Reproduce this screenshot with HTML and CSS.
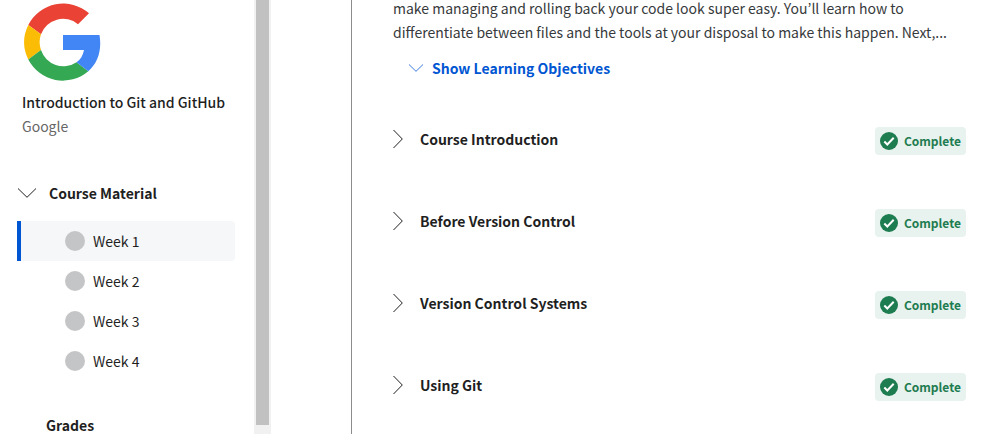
FILE: index.html
```html
<!DOCTYPE html>
<html lang="en">
<head>
<meta charset="utf-8">
<title>Introduction to Git and GitHub</title>
<link rel="stylesheet" href="styles.css">
</head>
<body>
<svg class="defs" aria-hidden="true">
  <symbol id="chevron-down" viewBox="0 0 18 10"><path d="M0 .5 9 9.300 18 .5"/></symbol>
  <symbol id="chevron-right" viewBox="0 0 10 18"><path d="M.5 0 9.300 9 .5 18"/></symbol>
  <symbol id="check" viewBox="0 0 18 18"><circle cx="9" cy="9" r="9"/><path d="M4.300 9.500 7.300 12.500 13.700 5.700"/></symbol>
</svg>
<div class="page">
  <aside class="sidebar">
    <div class="sidebar-content">
      <header class="course">
        <svg class="logo" viewBox="0 0 77 78" role="img" aria-label="Google">
          <path fill="#ea4335" d="M4.300 22A39 39 0 0 1 65 10.300L54 21.200A23.500 23.500 0 0 0 17 31.200Z"/>
          <path fill="#fbbc05" d="M4.300 22A39 39 0 0 0 4.300 56.500L17 47A23.500 23.500 0 0 1 17 31.200Z"/>
          <path fill="#34a853" d="M4.300 56.500A39 39 0 0 0 64.300 68.300L52.500 59.200A23.500 23.500 0 0 1 17 47Z"/>
          <path fill="#4285f4" d="M39 32H75.500C78 47 74 59.500 64.300 68.300L52.500 59.200C56.500 56.500 59 52.500 60 47H39Z"/>
        </svg>
        <h1 class="title">Introduction to Git and GitHub</h1>
        <p class="partner">Google</p>
      </header>
      <nav class="nav">
        <button class="nav-toggle" type="button" aria-expanded="true"><svg class="down" aria-hidden="true"><use href="#chevron-down"/></svg>Course Material</button>
        <ul class="weeks">
          <li><a class="week current" href="#week-1"><span class="dot"></span>Week 1</a></li>
          <li><a class="week" href="#week-2"><span class="dot"></span>Week 2</a></li>
          <li><a class="week" href="#week-3"><span class="dot"></span>Week 3</a></li>
          <li><a class="week" href="#week-4"><span class="dot"></span>Week 4</a></li>
        </ul>
        <a class="grades" href="#grades">Grades</a>
      </nav>
    </div>
    <div class="track"><div class="thumb"></div></div>
  </aside>
  <main class="main">
    <p class="summary">make managing and rolling back your code look super easy. You’ll learn how to differentiate between files and the tools at your disposal to make this happen. Next,...</p>
    <button class="objectives" type="button"><svg class="down small" aria-hidden="true"><use href="#chevron-down"/></svg>Show Learning Objectives</button>
    <ul class="modules">
      <li class="module"><button class="module-toggle" type="button"><svg class="right" aria-hidden="true"><use href="#chevron-right"/></svg>Course Introduction</button><span class="badge"><svg class="check" aria-hidden="true"><use href="#check"/></svg>Complete</span></li>
      <li class="module"><button class="module-toggle" type="button"><svg class="right" aria-hidden="true"><use href="#chevron-right"/></svg>Before Version Control</button><span class="badge"><svg class="check" aria-hidden="true"><use href="#check"/></svg>Complete</span></li>
      <li class="module"><button class="module-toggle" type="button"><svg class="right" aria-hidden="true"><use href="#chevron-right"/></svg>Version Control Systems</button><span class="badge"><svg class="check" aria-hidden="true"><use href="#check"/></svg>Complete</span></li>
      <li class="module"><button class="module-toggle" type="button"><svg class="right" aria-hidden="true"><use href="#chevron-right"/></svg>Using Git</button><span class="badge"><svg class="check" aria-hidden="true"><use href="#check"/></svg>Complete</span></li>
    </ul>
  </main>
</div>
</body>
</html>
```
FILE: styles.css
```css
* { box-sizing: border-box; }
body {
  margin: 0;
  background: #fff;
  color: #1f1f1f;
  font: 14px/24px "Noto Sans CJK KR", "Open Sans", sans-serif;
}
h1, p, ul { margin: 0; padding: 0; }
ul { list-style: none; }
a { color: inherit; text-decoration: none; }
button {
  display: flex;
  align-items: center;
  padding: 0;
  border: 0;
  background: none;
  color: inherit;
  font: inherit;
  font-weight: 700;
  cursor: pointer;
}
svg { display: block; flex: none; }
.defs { position: absolute; width: 0; height: 0; }
.page { display: flex; height: 100vh; overflow: hidden; }
.sidebar { display: flex; flex: none; width: 271px; }
.sidebar-content { flex: 1; padding: 3px 19px 0 17px; }
.course { padding-left: 5px; }
.logo { width: 77px; height: 78px; margin: 0 0 9px 2px; }
.title { font-size: 14px; line-height: 24px; font-weight: 500; white-space: nowrap; }
.partner { color: #666; }
.nav-toggle { gap: 13px; margin-top: 43px; padding-left: 1px; }
.down { width: 18px; height: 10px; }
.down.small { width: 14px; height: 8px; }
.right { width: 10px; height: 18px; }
.down, .right { fill: none; stroke: currentColor; stroke-width: 1; }
.weeks { margin: 16px 0 32px; }
.week {
  display: flex;
  align-items: center;
  gap: 8px;
  height: 40px;
  padding-left: 44px;
  border-left: 4px solid transparent;
  border-radius: 0 4px 4px 0;
}
.current { background: #f5f7f8; border-left-color: #0056d2; }
.dot { width: 20px; height: 20px; border-radius: 50%; background: #c4c5c7; }
.grades { display: block; padding-left: 29px; font-weight: 700; }
.track { width: 17px; background: #f1f1f1; padding: 0 2px 9px; }
.thumb { height: 100%; background: #c1c1c1; }
.main {
  flex: 1;
  margin-left: 80px;
  padding: 0 35px 0 41px;
  border-left: 1px solid #8c8c8c;
}
.summary { margin-top: -4px; color: #373a3c; }
.objectives { gap: 9px; margin: 12px 0 0 16px; color: #0056d2; }
.modules { display: grid; gap: 54px; margin-top: 47px; }
.module { display: flex; align-items: flex-start; justify-content: space-between; }
.module-toggle { gap: 17px; }
.badge {
  display: flex;
  align-items: center;
  gap: 6px;
  height: 28px;
  padding: 0 5px;
  border-radius: 4px;
  background: #e8f2ee;
  color: #1d7c50;
  font-size: 12px;
  font-weight: 700;
}
.check { width: 18px; height: 18px; fill: currentColor; }
#check path { fill: none; stroke: #fff; stroke-width: 2; }
```
